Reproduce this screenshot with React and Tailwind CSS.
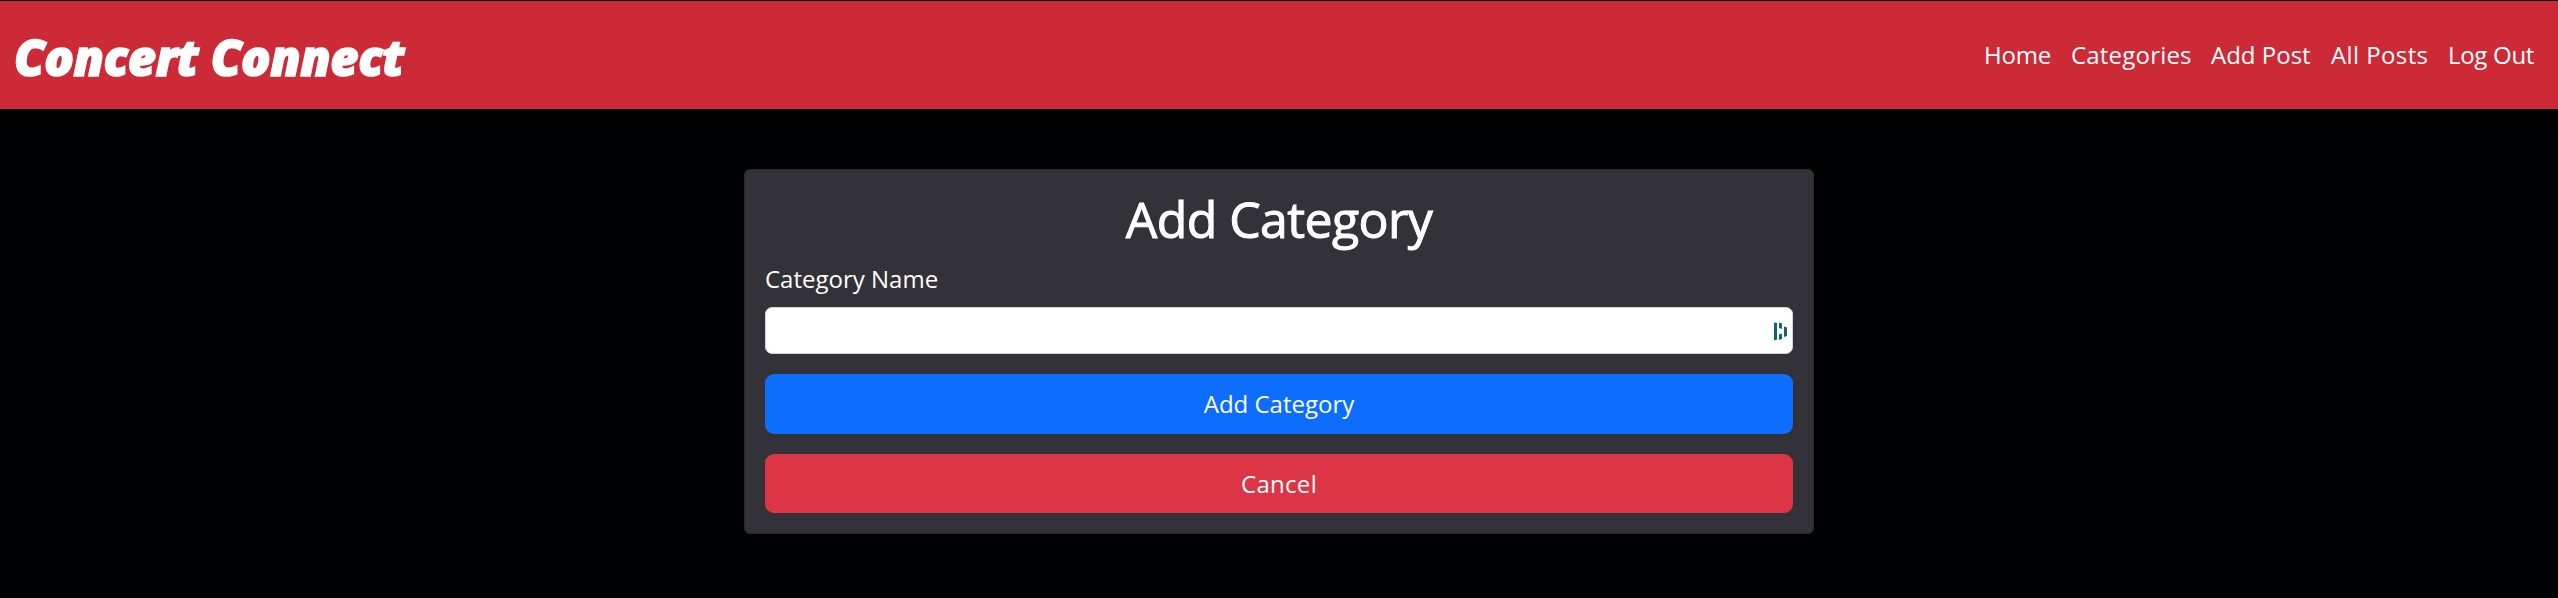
const links = [
  { label: "Home", cls: "w-[87px] tracking-[-0.2px]" },
  { label: "Categories", cls: "w-[140px] tracking-[0.2px]" },
  { label: "Add Post", cls: "w-[120px] tracking-[0px]" },
  { label: "All Posts", cls: "w-[117px] tracking-[0.4px]" },
  { label: "Log Out", cls: "w-[110px] tracking-[-0.3px]" },
];

function ManagerIcon() {
  return (
    <svg className="mt-[2px] h-[19px] w-[14px] shrink-0" viewBox="0 0 14 19" fill="#0e6573">
      <path d="M0 .5 3 1v16.500L0 18.500ZM5 .5 8 1.500V7L5 6ZM5 12.500 8 11.500V17L5 18ZM10 4.500 13 5.500V14L10 15Z" />
    </svg>
  );
}

export default function App() {
  return (
    <div className="h-[598px] w-full overflow-hidden bg-[#000103] pt-px font-['Open_Sans',sans-serif] text-2xl text-white">
      <header className="flex h-[108px] items-center justify-between bg-[#cb2a36]">
        <a className="mt-[3px] ml-[14px] whitespace-nowrap font-['Open_Sans',sans-serif] text-[49px] leading-[60px] font-extrabold italic tracking-[-0.5px] [-webkit-text-stroke:1.5px_white] [stroke-linejoin:round]">
          Concert Connect
        </a>
        <nav className="flex whitespace-nowrap">
          {links.map((l) => (
            <a key={l.label} className={l.cls}>{l.label}</a>
          ))}
        </nav>
      </header>
      <main className="mx-auto mt-[60px] flex h-[365px] w-[1070px] flex-col rounded-[6px] border border-[#29282d] bg-[#333238] px-5">
        <h1 className="mt-[19px] h-[61px] whitespace-nowrap text-center text-[50px] leading-[60px] font-medium tracking-[-0.6px] [-webkit-text-stroke:1px_white]">
          Add Category
        </h1>
        <label className="mt-[11px] h-[36px] leading-[36px]">Category Name</label>
        <div className="mt-[10px] flex h-[47px] items-center justify-end rounded-[7px] border border-[#ced4da] bg-white pr-[4px]">
          <ManagerIcon />
        </div>
        <button className="mt-5 h-[60px] rounded-[9px] bg-[#0d6efd]">Add Category</button>
        <button className="mt-5 h-[59px] rounded-[9px] bg-[#dc3545] tracking-[0.3px]">Cancel</button>
      </main>
    </div>
  );
}
